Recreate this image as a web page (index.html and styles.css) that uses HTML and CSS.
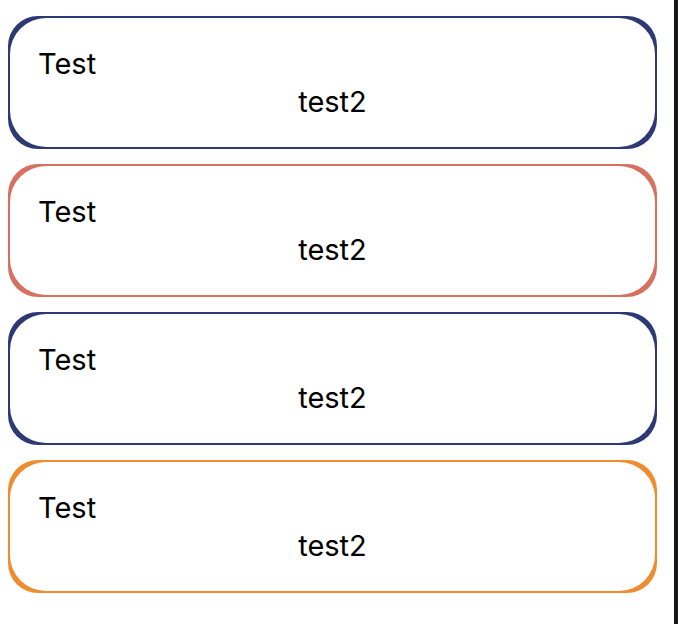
FILE: index.html
```html
<!DOCTYPE html>
<html>
<head>
<meta charset="utf-8">
<link rel="stylesheet" href="styles.css">
</head>
<body>
<div class="page">
  <div class="list">
    <div class="card navy"><div class="inner"><div class="title">Test</div><div class="sub">test2</div></div></div>
    <div class="card salmon"><div class="inner"><div class="title">Test</div><div class="sub">test2</div></div></div>
    <div class="card navy"><div class="inner"><div class="title">Test</div><div class="sub">test2</div></div></div>
    <div class="card orange"><div class="inner"><div class="title">Test</div><div class="sub">test2</div></div></div>
  </div>
  <div class="strip"></div>
</div>
</body>
</html>
```
FILE: styles.css
```css
html, body {
  margin: 0;
  padding: 0;
  background: #ffffff;
}
.page {
  display: flex;
  width: 678px;
  height: 624px;
}
.list {
  flex: 1;
  display: flex;
  flex-direction: column;
  gap: 15px;
  padding: 16px 17px 0 8px;
}
.strip {
  width: 4px;
  background: #161616;
}
.card {
  border-radius: 30px;
  padding: 2px;
}
.card.navy { background: #2d3975; }
.card.salmon { background: #d6705f; }
.card.orange { background: #f08c30; }
.inner {
  background: #ffffff;
  border-radius: 36px;
  padding: 27px 0 26px 28px;
  font-family: Inter, Roboto, "Liberation Sans", sans-serif;
  font-size: 29px;
  line-height: 38px;
  color: #000000;
}
.sub {
  text-align: center;
  margin-left: -28px;
}
```
